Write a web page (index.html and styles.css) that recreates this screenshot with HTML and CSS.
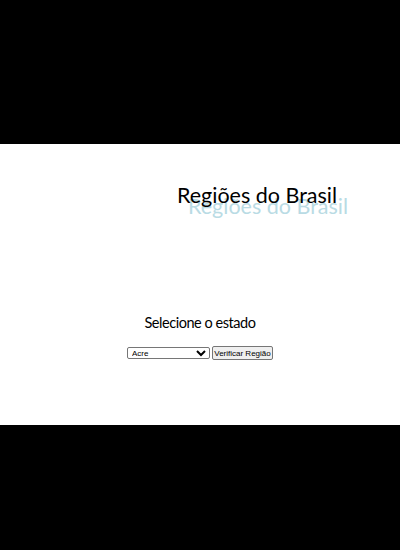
FILE: index.html
```html
<!DOCTYPE html>
<html lang="pt-BR">
<head>
<meta charset="utf-8">
<title>Regiões do Brasil</title>
<link rel="stylesheet" href="styles.css">
</head>
<body>
<div class="band"></div>
<main class="page">
  <h1 class="title">Regiões do Brasil</h1>
  <h2 class="label">Selecione o estado</h2>
  <div class="controls">
    <select class="state">
      <option>Acre</option>
      <option>Alagoas</option>
      <option>Amapá</option>
    </select>
    <button class="check" type="button">Verificar Região</button>
  </div>
</main>
<div class="band bottom"></div>
</body>
</html>
```
FILE: styles.css
```css
html, body {
  margin: 0;
  padding: 0;
  background: #000;
}
.band {
  height: 144px;
}
.band.bottom {
  height: 125px;
}
.page {
  background: #fff;
  height: 281px;
  display: flex;
  flex-direction: column;
  align-items: center;
  font-family: Lato, sans-serif;
}
.title {
  margin: 37px 0 0 114px;
  font-size: 21.5px;
  font-weight: 400;
  line-height: 28px;
  color: #000;
  text-shadow: 11px 11px 0 #b9dbe4;
}
.label {
  margin: 105px 0 0 0;
  font-size: 14.5px;
  font-weight: 400;
  letter-spacing: -0.45px;
  line-height: 18px;
}
.controls {
  margin-top: 14px;
  display: flex;
  align-items: center;
  gap: 2px;
}
.state {
  width: 83px;
  height: 12px;
  font-family: "Liberation Sans", sans-serif;
  font-size: 8px;
  padding: 0;
  border: 1px solid #767676;
  border-radius: 2px;
  background: #fff;
}
.check {
  width: 61px;
  height: 14px;
  padding: 0;
  font-family: "Liberation Sans", sans-serif;
  font-size: 8px;
  color: #000;
  background: #efefef;
  border: 1px solid #767676;
  border-radius: 2px;
}
```
